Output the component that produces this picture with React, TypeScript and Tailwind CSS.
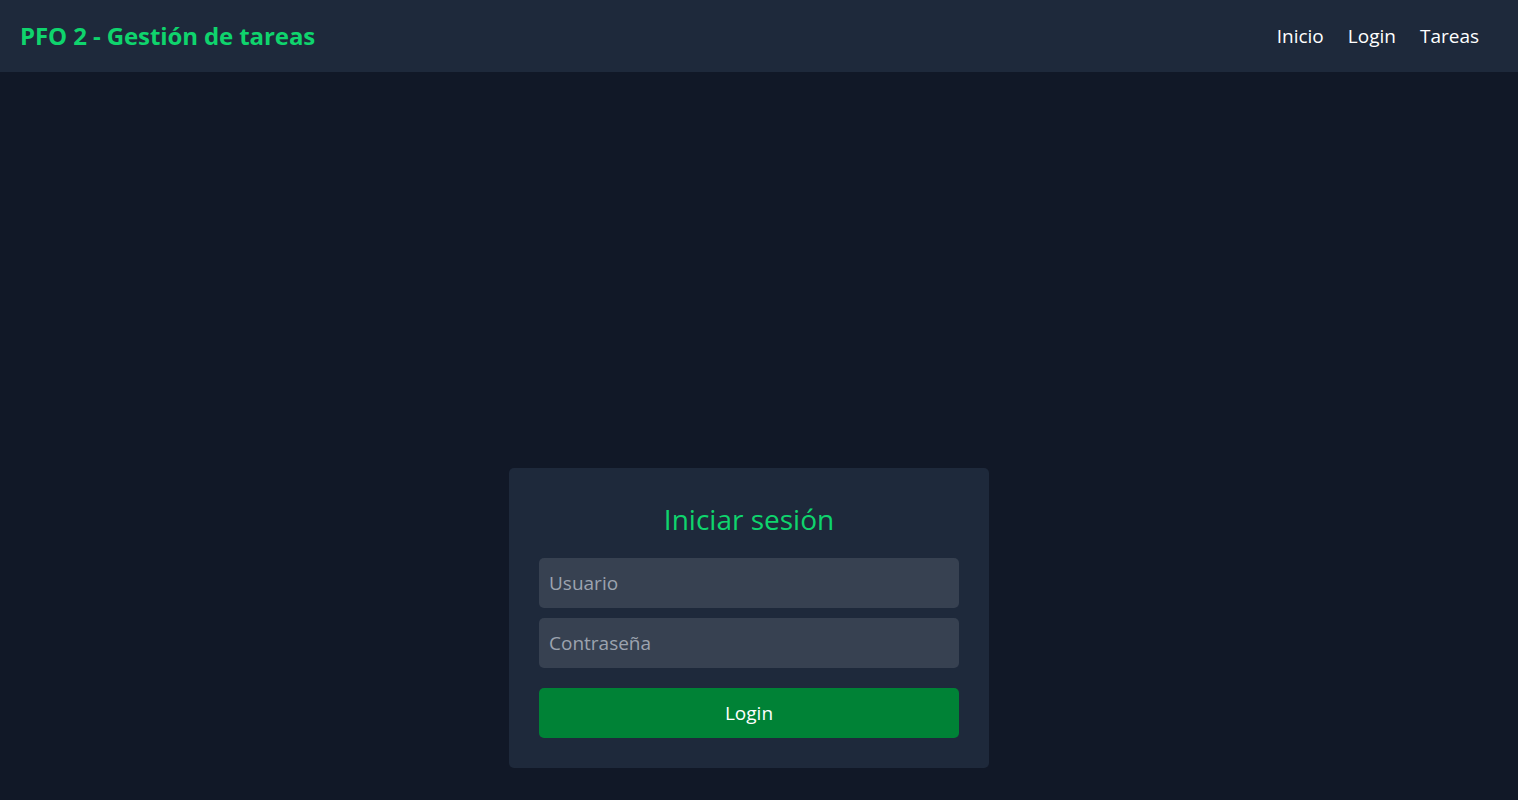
export default function App() {
  const links = ["Inicio", "Login", "Tareas"];

  return (
    <div className="min-h-screen bg-[#111827] font-['Open_Sans',sans-serif] text-white">
      <header className="flex h-[72px] items-center justify-between bg-[#1e293b] pl-5 pr-[39px]">
        <h1 className="text-[24px] font-bold tracking-[-0.1px] text-[#0fd46d]">
          PFO 2 - Gestión de tareas
        </h1>
        <nav className="flex items-center gap-[24px] text-[19px]">
          {links.map((l) => (
            <a key={l} href="#" className="text-white">
              {l}
            </a>
          ))}
        </nav>
      </header>

      <main className="flex justify-center pr-5 pt-[396px]">
        <div className="w-[480px] rounded-[5px] bg-[#1e293b] p-[30px]">
          <h2 className="mb-5 h-[40px] text-center text-[28px] leading-[42px] text-[#0fd46d]">
            Iniciar sesión
          </h2>
          <div className="flex flex-col gap-[10px]">
            <input
              type="text"
              placeholder="Usuario"
              className="h-[50px] w-full rounded-[5px] bg-[#374151] px-[10px] text-[19px] text-white outline-none placeholder:text-[#9ca3af]"
            />
            <input
              type="password"
              placeholder="Contraseña"
              className="h-[50px] w-full rounded-[5px] bg-[#374151] px-[10px] text-[19px] text-white outline-none placeholder:text-[#9ca3af]"
            />
          </div>
          <button className="mt-5 h-[50px] w-full rounded-[5px] bg-[#008236] text-[19px] text-white">
            Login
          </button>
        </div>
      </main>
    </div>
  );
}
